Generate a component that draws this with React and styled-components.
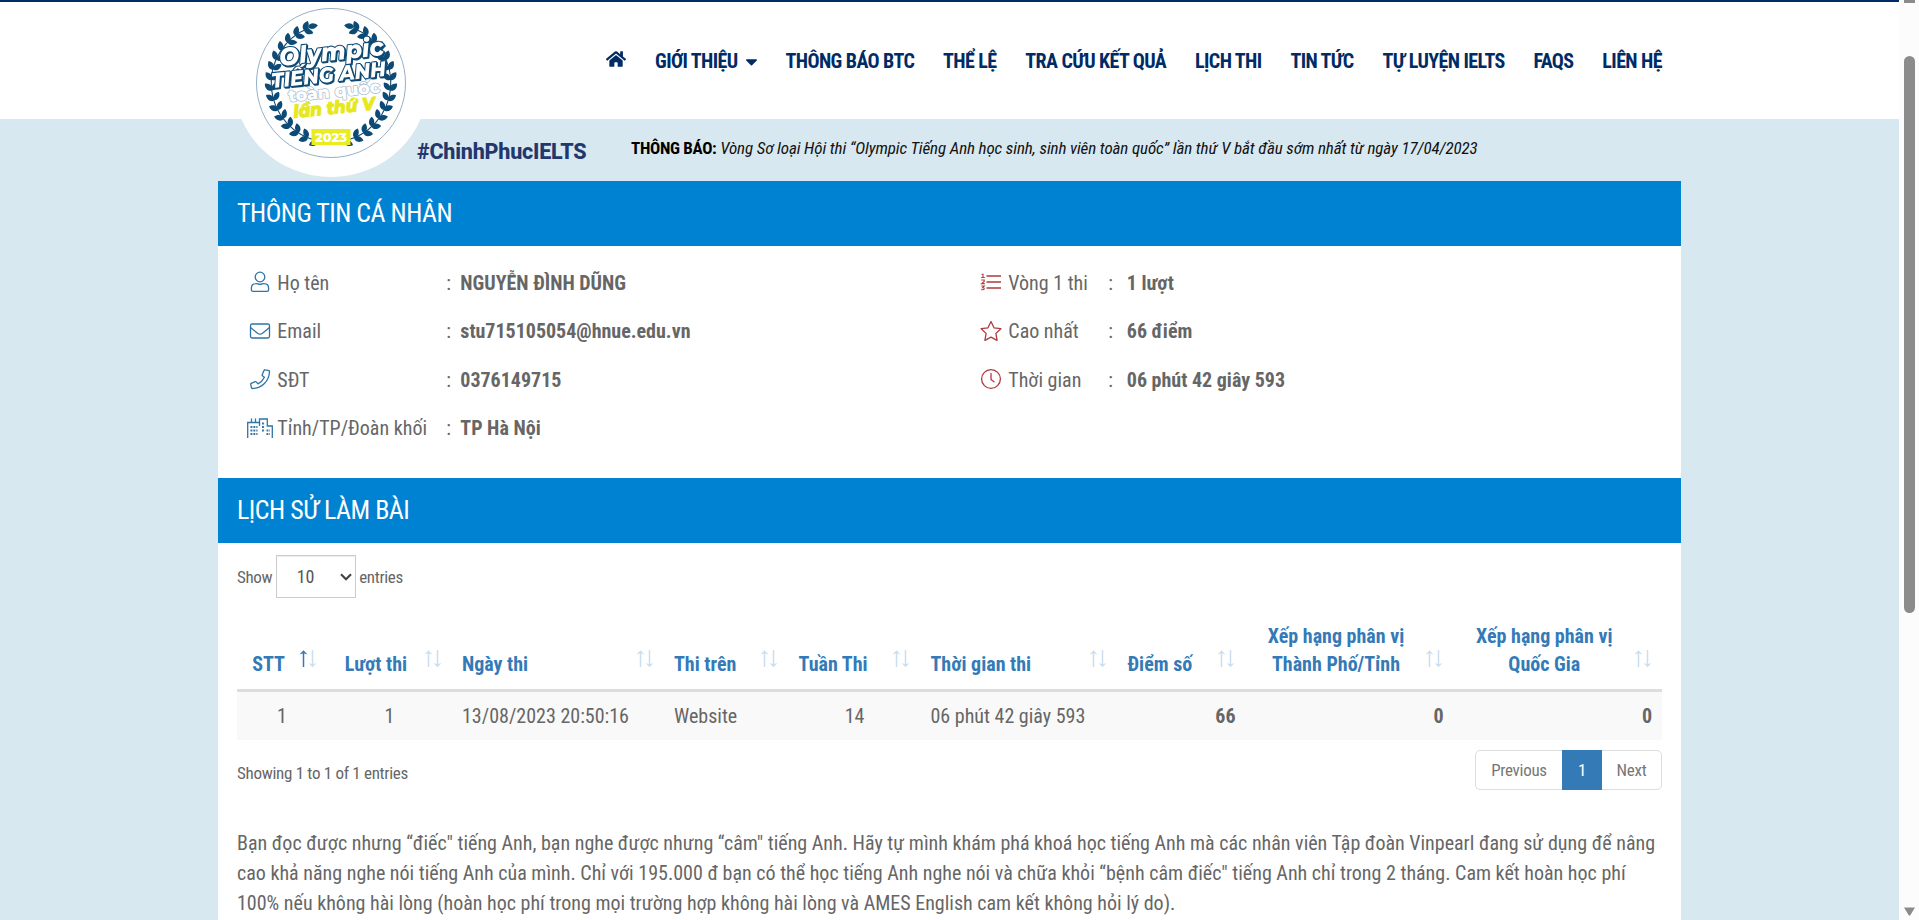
import React from "react";
import styled, { createGlobalStyle } from "styled-components";
import { FaHome, FaCaretDown } from "react-icons/fa";

const Global = createGlobalStyle`
  *, *::before, *::after { box-sizing: border-box; }
  html, body { margin: 0; padding: 0; }
  body {
    font-family: "Roboto Condensed", Roboto, "Liberation Sans", sans-serif;
    font-stretch: 75%;
    font-size: 20px;
    line-height: 28.57px;
    color: #666;
    overflow: hidden;
  }
`;

const Screen = styled.div`
  display: flex;
  width: 1919px;
  height: 920px;
  overflow: hidden;
  background: #d8e8f0;
`;
const Page = styled.div`
  width: 1899px;
  display: flex;
  flex-direction: column;
`;
const Header = styled.header`
  height: 119px;
  flex: none;
  background: #fff;
  border-top: 2px solid #002b64;
`;
const HeaderInner = styled.div`
  position: relative;
  width: 1463px;
  margin: 0 auto;
  padding: 45px 19px 0 0;
  display: flex;
  justify-content: flex-end;
`;
const LogoBadge = styled.svg`
  position: absolute;
  left: 13px;
  top: 0;
`;
const Nav = styled.nav`
  display: flex;
  align-items: center;
  gap: 28.8px;
  height: 28px;
  color: #002b64;
  font-size: 20px;
  font-weight: 700;
  letter-spacing: -0.58px;
  white-space: nowrap;
`;
const HomeIcon = styled(FaHome)`
  margin-top: -4px;
`;
const CaretIcon = styled(FaCaretDown)`
  margin: 1px -4px 0 4px;
`;
const NavItem = styled.span`
  display: flex;
  align-items: center;
`;
const Notice = styled.div`
  width: 1463px;
  height: 62px;
  flex: none;
  margin: 0 auto;
  padding-left: 199px;
  display: flex;
  white-space: nowrap;
`;
const HashTag = styled.span`
  width: 214px;
  padding-top: 19px;
  font-family: Roboto, "Liberation Sans", sans-serif;
  font-size: 21.5px;
  letter-spacing: -0.2px;
  font-stretch: 100%;
  font-weight: 800;
  color: #22386d;
`;
const NoticeText = styled.p`
  margin: 0;
  padding-top: 15px;
  font-size: 17px;
  letter-spacing: -0.12px;
  color: #111;
  b { color: #000; letter-spacing: -0.32px; }
`;
const Panel = styled.main`
  width: 1463px;
  margin: 0 auto;
  flex: 1;
  background: #fff;
`;
const Title = styled.h3`
  margin: 0;
  height: 65px;
  padding: 0 19px;
  line-height: 65px;
  font-size: 26px;
  letter-spacing: -0.5px;
  font-weight: 400;
  color: #fff;
  background: #0082d2;
`;
const InfoGrid = styled.div`
  height: 232px;
  padding: 13px 0 0 27px;
  display: grid;
  grid-template-columns: 731px 1fr;
`;
const InfoRow = styled.div`
  display: grid;
  grid-template-columns: 32.3px ${(p) => (p.$wide ? "169px 14px" : "100px 18.500px")} 1fr;
  height: 48.5px;
  align-items: center;
  white-space: nowrap;
  svg { margin: -2px 0 0 4px; color: ${(p) => (p.$wide ? "#2f74a3" : "#b03a3c")}; }
`;
const History = styled.section`
  padding: 0 19px;
`;
const LengthBar = styled.div`
  display: flex;
  align-items: center;
  gap: 3.5px;
  padding-top: 12px;
  font-size: 17px;
  letter-spacing: -0.35px;
  span { padding-top: 2px; }
`;
const Select = styled.div`
  width: 80px;
  height: 43px;
  padding: 0 3px 0 20px;
  border: 1px solid #ccc;
  box-shadow: inset 0 1px 1px rgba(0, 0, 0, 0.075);
  display: flex;
  align-items: center;
  justify-content: space-between;
  font-size: 18px;
  line-height: 43px;
  letter-spacing: 0;
  color: #555;
`;
const Table = styled.table`
  margin-top: 14px;
  width: 1425px;
  border-collapse: separate;
  border-spacing: 0;
  table-layout: fixed;
`;
const Th = styled.th`
  position: relative;
  width: ${(p) => p.$w}px;
  height: 80px;
  padding: 10px ${(p) => (p.$align === "left" ? 0 : 37)}px 11px 10px;
  vertical-align: bottom;
  text-align: ${(p) => p.$align};
  line-height: 28px;
  color: #337ab7;
  border-bottom: 3px solid #ddd;
  white-space: nowrap;
  svg { position: absolute; right: 10.5px; bottom: 21px; }
`;
const Td = styled.td`
  height: 48px;
  padding: 0 10px;
  text-align: ${(p) => p.$align};
  font-weight: ${(p) => (p.$bold ? 700 : 400)};
  background: #f9f9f9;
  white-space: nowrap;
`;
const TableFoot = styled.div`
  display: flex;
  justify-content: space-between;
  padding-top: 10px;
  font-size: 17px;
  letter-spacing: -0.3px;
`;
const Summary = styled.div`
  padding-top: 9px;
`;
const Pager = styled.div`
  display: flex;
  height: 40px;
  border: 1px solid #ddd;
  border-radius: 5px;
`;
const PageLink = styled.span`
  width: ${(p) => p.$w}px;
  margin: ${(p) => (p.$active ? "-1px 0" : "0")};
  padding-top: 1px;
  display: flex;
  align-items: center;
  justify-content: center;
  color: ${(p) => (p.$active ? "#fff" : "#777")};
  background: ${(p) => (p.$active ? "#337ab7" : "transparent")};
`;
const Promo = styled.p`
  margin: 38px 0 0;
  line-height: 30px;
  white-space: nowrap;
`;
const ScrollTrack = styled.aside`
  width: 20px;
  height: 920px;
  padding: 0 4px 4px 5px;
  display: flex;
  flex-direction: column;
  align-items: center;
  background: #fcfcfc;
`;
const ScrollStub = styled.div`
  width: 11px;
  height: 3px;
  background: #8b8b8b;
`;
const ScrollThumb = styled.div`
  width: 11px;
  height: 557px;
  margin: 53px 0 auto;
  border-radius: 6px;
  background: #8b8b8b;
`;

const NAVY = "#0d4a75";

function Leaf({ x, y, a, l = 9 }) {
  return (
    <path
      d={`M0 0C${l * 0.15} ${-l * 0.4} ${l * 0.7} ${-l * 0.4} ${l} 0C${l * 0.7} ${l * 0.36} ${l * 0.15} ${l * 0.34} 0 0Z`}
      transform={`translate(${x} ${y}) rotate(${a})`}
      fill={NAVY}
    />
  );
}

function Branch() {
  const items = [];
  for (let i = 0; i < 15; i++) {
    const deg = 103 + i * 10;
    const t = (deg * Math.PI) / 180;
    const x = Math.cos(t) * 59;
    const y = Math.sin(t) * 59;
    items.push(<Leaf key={"o" + i} x={x} y={y} a={deg + 48} l={10} />);
    items.push(<Leaf key={"i" + i} x={x} y={y} a={deg + 134} l={9.5} />);
  }
  items.push(<Leaf key="tip" x={-23} y={-56} a={-10} l={10} />);
  return (
    <g>
      <path d="M-12 58A59 59 0 0 1 -22 -55" fill="none" stroke={NAVY} strokeWidth="1.100" />
      {items}
    </g>
  );
}

const LogoTitle = styled.g`
  font-style: italic;
  fill: #fff;
  stroke: ${NAVY};
  stroke-width: 2.2px;
  filter: drop-shadow(1px 1px 0 ${NAVY});
`;

function Logo() {
  const text = {
    fontFamily: 'Montserrat, "Open Sans", sans-serif',
    fontWeight: 800,
    fontStretch: "100%",
    paintOrder: "stroke",
    strokeLinejoin: "round",
  };
  return (
    <LogoBadge width="200" height="178" viewBox="231 2 200 178">
      <ellipse cx="331" cy="83" rx="97" ry="94" fill="#fff" />
      <circle cx="331" cy="83" r="74.500" fill="#fff" stroke="#8ba6c0" strokeWidth="0.900" />
      <g transform="translate(331 83)">
        <Branch />
        <g transform="scale(-1 1)"><Branch /></g>
      </g>
      <g style={text}>
        <LogoTitle>
          <text x="280" y="66" fontSize="25" textLength="105" lengthAdjust="spacingAndGlyphs" transform="rotate(-6 280 66)">Olympic</text>
          <text x="272" y="88" fontSize="21" textLength="115" lengthAdjust="spacingAndGlyphs" transform="rotate(-6 272 88)">TIẾNG ANH</text>
        </LogoTitle>
        <text x="289" y="102" fontSize="17" fill="#fff" stroke="#a9c0d5" strokeWidth="1.500" textLength="92" lengthAdjust="spacingAndGlyphs" transform="rotate(-6 289 102)">toàn quốc</text>
        <text x="294" y="118" fontSize="18" fontStyle="italic" fill="#e6e81c" stroke="#e6e81c" strokeWidth="0.900" textLength="82" lengthAdjust="spacingAndGlyphs" transform="rotate(-6 294 118)">lần thứ V</text>
        <rect x="311.500" y="129" width="39" height="16" fill="#e9ec20" />
        <text x="315" y="142" fontSize="13" fill="#fff" textLength="32" lengthAdjust="spacingAndGlyphs">2023</text>
      </g>
    </LogoBadge>
  );
}

const Line = ({ w = 20, h = 20, children }) => (
  <svg width={w} height={h} viewBox={`0 0 ${w} ${h}`} fill="none" stroke="currentColor" strokeWidth="1.300" strokeLinejoin="round" strokeLinecap="round" overflow="visible">
    {children}
  </svg>
);
const UserIcon = () => (
  <Line w={22}>
    <circle cx="11" cy="5" r="4.800" />
    <path d="M6.800 11.600C8.500 11.400 9 12.400 11 12.400S13.500 11.400 15.200 11.600C18 11.700 19.600 13.500 19.600 16V17.700Q19.600 19.300 18 19.300H4Q2.400 19.300 2.400 17.700V16C2.400 13.500 4 11.700 6.800 11.600Z" />
  </Line>
);
const MailIcon = () => (
  <Line w={22}>
    <rect x="1.500" y="3" width="19" height="14" rx="1.800" />
    <path d="M1.800 6.800L8.500 12.200Q11 14.200 13.500 12.200L20.200 6.800" />
  </Line>
);
const PhoneIcon = () => (
  <Line w={22}>
    <path d="M16.200 0.800L20 1.600Q20.600 1.800 20.500 2.500C20.200 12 13 19.300 3.300 19.500Q2.600 19.500 2.500 18.900L1.700 15.300Q1.600 14.600 2.200 14.300L6.300 12.600Q6.900 12.400 7.300 12.900L8.900 14.800C11.700 13.500 14 11.300 15.400 8.300L13.400 6.700Q12.900 6.300 13.200 5.700L15.100 1.300Q15.500 0.600 16.200 0.800Z" />
  </Line>
);
const CitySvg = styled.svg`
  && { margin-left: 2px; }
`;
const CityIcon = () => (
  <CitySvg width="26" height="20" viewBox="0 0 26 20" fill="none" stroke="currentColor" strokeWidth="1.300">
    <path d="M0.700 20V4.500H12.500V1H20.300V8H25.300V20" />
    <path d="M4.500 4V0.500M8.500 4V0.500M12.500 4.500V8" />
    <path d="M3.500 9H10.500M3.500 12.500H10.500M3.500 16H10.500M15 5.500H18M15 9H18M15 12.500H18M19.500 12.500H23M19.500 16H23" strokeWidth="1.900" strokeDasharray="1.900 1" />
  </CitySvg>
);
const ListIcon = () => (
  <svg width="22" height="20" viewBox="0 0 22 20" fill="none" stroke="currentColor" strokeWidth="1.300">
    <path d="M6.500 4H21M6.500 10H21M6.500 16H21" />
    <path d="M1.500 2.300H3V5.300M1.200 5.500H4.800M1.300 8H4.200V9.500L1.700 11.600H4.800M1.300 14H4.300L2.700 15.600Q4.400 15.600 4.200 17Q3.700 18.200 1.300 17.600" strokeWidth="1.100" />
  </svg>
);
const StarIcon = () => (
  <Line w={22}>
    <path d="M11 0.500L14 6.800L20.900 7.700L15.900 12.400L17.100 19.400L11 16.100L4.900 19.400L6.100 12.400L1.100 7.700L8 6.800Z" />
  </Line>
);
const ClockIcon = () => (
  <Line w={22}>
    <circle cx="11" cy="10" r="9.400" />
    <path d="M11 4.500V10.500L14 12.800" />
  </Line>
);
const SortIcon = ({ active }) => (
  <svg width="18" height="18" viewBox="0 0 18 18" fill="none">
    <g stroke={active ? "#337ab7" : "#cbdff0"} fill={active ? "#337ab7" : "#cbdff0"}>
      <path d="M4.500 17V2" strokeWidth="1.500" />
      <path d="M4.500 0.300L8.500 4.500L4.500 3.300L0.500 4.500Z" stroke="none" />
    </g>
    <g stroke="#cbdff0" fill="#cbdff0">
      <path d="M13.500 0V15.500" strokeWidth="1.500" />
      <path d="M13.500 17.200L17.500 13L13.500 14.200L9.500 13Z" stroke="none" />
    </g>
  </svg>
);

const left = [
  [UserIcon, "Họ tên", "NGUYỄN ĐÌNH DŨNG"],
  [MailIcon, "Email", "stu715105054@hnue.edu.vn"],
  [PhoneIcon, "SĐT", "0376149715"],
  [CityIcon, "Tỉnh/TP/Đoàn khối", "TP Hà Nội"],
];
const right = [
  [ListIcon, "Vòng 1 thi", "1 lượt"],
  [StarIcon, "Cao nhất", "66 điểm"],
  [ClockIcon, "Thời gian", "06 phút 42 giây 593"],
];
const columns = [
  { w: 90, h: "STT", ha: "center", v: "1", va: "center" },
  { w: 125, h: "Lượt thi", ha: "center", v: "1", va: "center" },
  { w: 212, h: "Ngày thi", ha: "left", v: "13/08/2023 20:50:16", va: "left" },
  { w: 124.5, h: "Thi trên", ha: "left", v: "Website", va: "left" },
  { w: 132, h: "Tuần Thi", ha: "left", v: "14", va: "center" },
  { w: 197, h: "Thời gian thi", ha: "left", v: "06 phút 42 giây 593", va: "left" },
  { w: 128, h: "Điểm số", ha: "left", v: "66", va: "right", b: true },
  { w: 208, h: <>Xếp hạng phân vị<br />Thành Phố/Tỉnh</>, ha: "center", v: "0", va: "right", b: true },
  { w: 208.5, h: <>Xếp hạng phân vị<br />Quốc Gia</>, ha: "center", v: "0", va: "right", b: true },
];
const nav = ["THÔNG BÁO BTC", "THỂ LỆ", "TRA CỨU KẾT QUẢ", "LỊCH THI", "TIN TỨC", "TỰ LUYỆN IELTS", "FAQS", "LIÊN HỆ"];

function InfoColumn({ rows, wide }) {
  return (
    <div>
      {rows.map(([Icon, label, value]) => (
        <InfoRow key={label} $wide={wide}>
          <Icon />
          <span>{label}</span>
          <span>:</span>
          <b>{value}</b>
        </InfoRow>
      ))}
    </div>
  );
}

export default function App() {
  return (
    <Screen>
      <Global />
      <Page>
        <Header>
          <HeaderInner>
            <Logo />
            <Nav>
              <HomeIcon size={20} />
              <NavItem>GIỚI THIỆU <CaretIcon size={19} /></NavItem>
              {nav.map((n) => <NavItem key={n}>{n}</NavItem>)}
            </Nav>
          </HeaderInner>
        </Header>
        <Notice>
          <HashTag>#ChinhPhucIELTS</HashTag>
          <NoticeText>
            <b>THÔNG BÁO:</b> <i>Vòng Sơ loại Hội thi “Olympic Tiếng Anh học sinh, sinh viên toàn quốc” lần thứ V bắt đầu sớm nhất từ ngày 17/04/2023</i>
          </NoticeText>
        </Notice>
        <Panel>
          <Title>THÔNG TIN CÁ NHÂN</Title>
          <InfoGrid>
            <InfoColumn rows={left} wide />
            <InfoColumn rows={right} />
          </InfoGrid>
          <Title>LỊCH SỬ LÀM BÀI</Title>
          <History>
            <LengthBar>
              <span>Show</span>
              <Select>
                10
                <svg width="12" height="8" viewBox="0 0 12 8" fill="none" stroke="#444" strokeWidth="2.200"><path d="M1 1.200L6 6.200L11 1.200" /></svg>
              </Select>
              <span>entries</span>
            </LengthBar>
            <Table>
              <thead>
                <tr>
                  {columns.map((c, i) => (
                    <Th key={i} $w={c.w} $align={c.ha}>{c.h}<SortIcon active={i === 0} /></Th>
                  ))}
                </tr>
              </thead>
              <tbody>
                <tr>
                  {columns.map((c, i) => <Td key={i} $align={c.va} $bold={c.b}>{c.v}</Td>)}
                </tr>
              </tbody>
            </Table>
            <TableFoot>
              <Summary>Showing 1 to 1 of 1 entries</Summary>
              <Pager>
                <PageLink $w={86}>Previous</PageLink>
                <PageLink $w={40} $active>1</PageLink>
                <PageLink $w={59}>Next</PageLink>
              </Pager>
            </TableFoot>
            <Promo>
              Bạn đọc được nhưng “điếc" tiếng Anh, bạn nghe được nhưng “câm" tiếng Anh. Hãy tự mình khám phá khoá học tiếng Anh mà các nhân viên Tập đoàn Vinpearl đang sử dụng để nâng<br />
              cao khả năng nghe nói tiếng Anh của mình. Chỉ với 195.000 đ bạn có thể học tiếng Anh nghe nói và chữa khỏi “bệnh câm điếc" tiếng Anh chỉ trong 2 tháng. Cam kết hoàn học phí<br />
              100% nếu không hài lòng (hoàn học phí trong mọi trường hợp không hài lòng và AMES English cam kết không hỏi lý do).
            </Promo>
          </History>
        </Panel>
      </Page>
      <ScrollTrack>
        <ScrollStub />
        <ScrollThumb />
        <svg width="11" height="9" viewBox="0 0 11 9"><path d="M0 0.500H11L6.300 8.300Q5.500 9 4.700 8.300Z" fill="#8b8b8b" /></svg>
      </ScrollTrack>
    </Screen>
  );
}
